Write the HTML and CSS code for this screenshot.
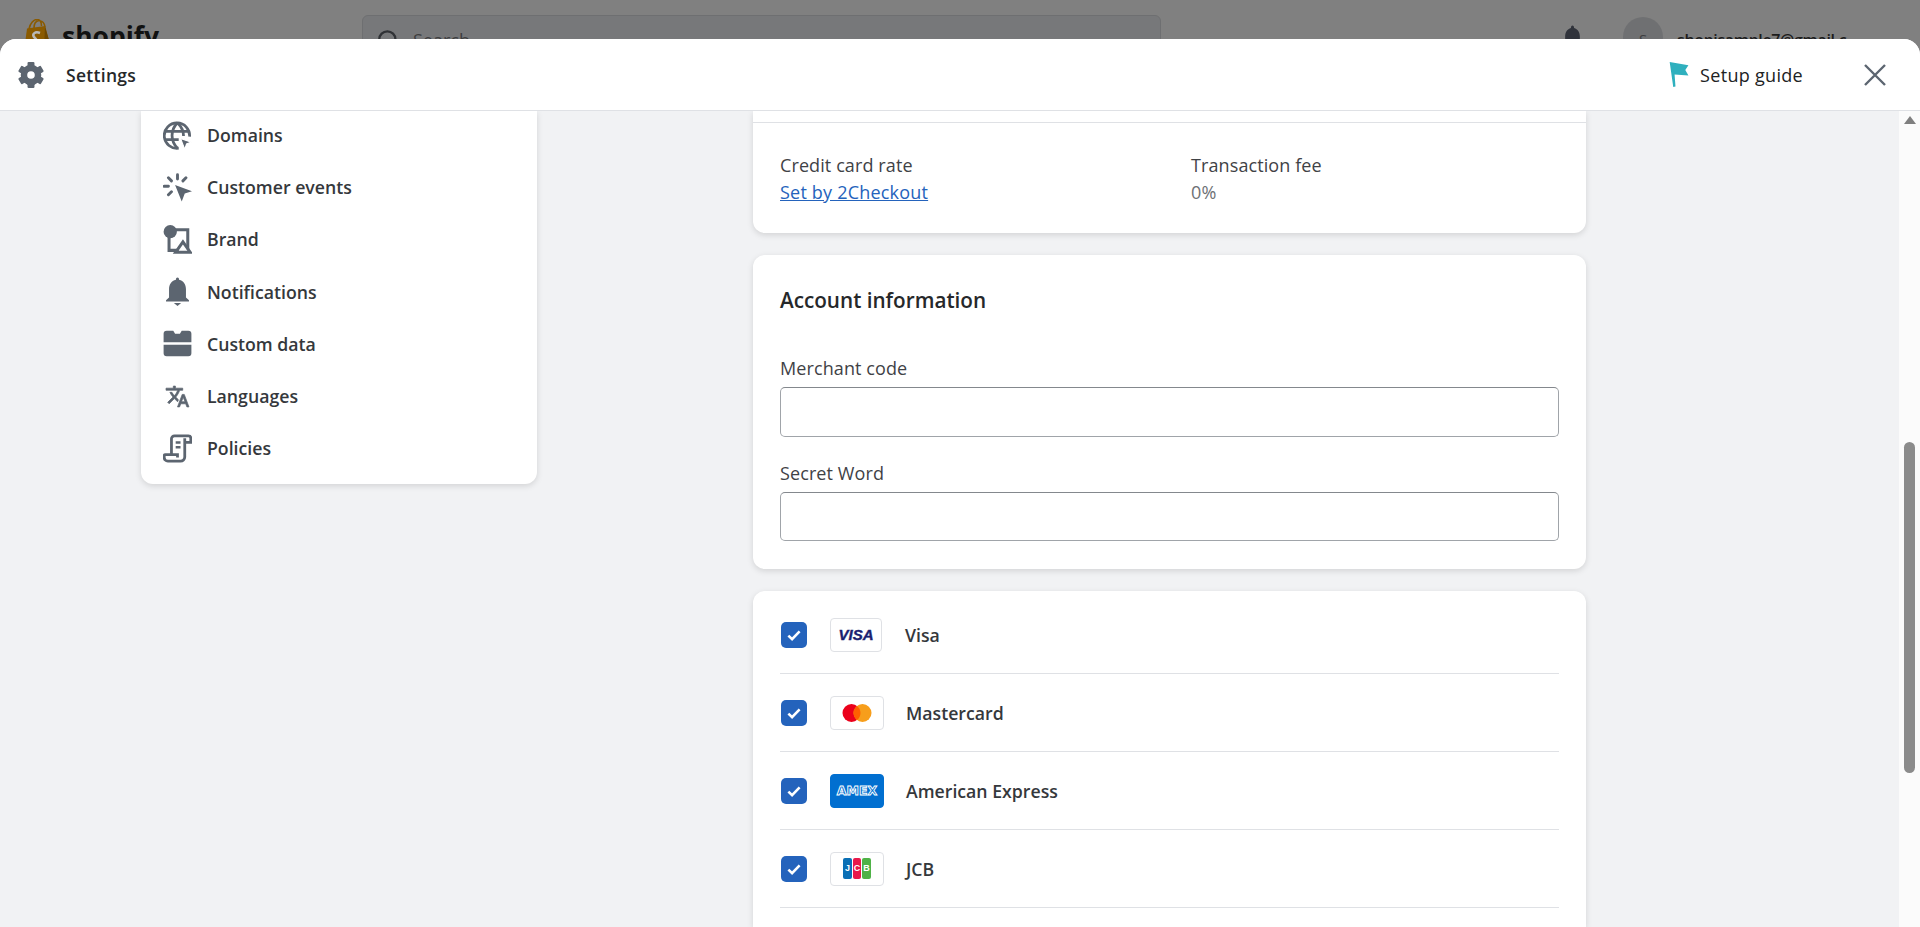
FILE: index.html
```html
<!DOCTYPE html>
<html lang="en">
<head>
    <meta charset="UTF-8">
    <meta name="viewport" content="width=device-width, initial-scale=1.0">
    <title>Settings</title>
    <link rel="stylesheet" href="styles.css">
</head>
<body>

    <div class="topbar">
        <div class="brand">
            <svg class="brand-bag" viewBox="0 0 28 32"><path d="M5 10c1-6 5-9.500 8-9.500 3 0 4.500 3 4.500 6.500M10 9c0-4 2-7 5-7.500M16 2c3 0 4.500 3 5 6" fill="none" stroke="#8a5a00" stroke-width="1.600"/><path d="M3 9.500L21 7l7 25H0z" fill="#8a5a00"/><path d="M21 7l7 25h-8z" fill="#6e4800"/><path d="M16 14c-5-2-8 1-6 4 2 2 4 3 1 7-1 1-3 0-4-1" fill="none" stroke="#b9b9b9" stroke-width="2.500"/></svg>
            <span class="brand-name">shopify</span>
        </div>
        <div class="search">
            <svg class="search-icon" viewBox="0 0 20 20"><circle cx="9" cy="9" r="7" fill="none" stroke="#303236" stroke-width="2"/><path d="M14 14l5 5" stroke="#303236" stroke-width="2"/></svg>
            <span>Search</span>
        </div>
        <svg class="top-bell" viewBox="0 0 20 24"><path d="M10 0c1 0 1.500 1 1.500 2.500 3.500 1 5.500 4 5.500 8v8H3v-8c0-4 2-7 5.500-8C8.500 1 9 0 10 0z" fill="#30333b"/></svg>
        <div class="avatar">S</div>
        <span class="email">shopisample7@gmail.c</span>
    </div>

    <div class="modal">
        <div class="modal-head">
            <svg class="gear" viewBox="0 0 24 24">
                <circle cx="12" cy="12" r="6.500" fill="none" stroke="#5c6570" stroke-width="6"/>
                <g fill="#5c6570">
                    <rect x="8.800" y="0" width="6.400" height="5.500" rx="1"/>
                    <rect x="8.800" y="18.500" width="6.400" height="5.500" rx="1"/>
                    <rect x="8.800" y="0" width="6.400" height="5.500" rx="1" transform="rotate(60 12 12)"/>
                    <rect x="8.800" y="0" width="6.400" height="5.500" rx="1" transform="rotate(120 12 12)"/>
                    <rect x="8.800" y="0" width="6.400" height="5.500" rx="1" transform="rotate(240 12 12)"/>
                    <rect x="8.800" y="0" width="6.400" height="5.500" rx="1" transform="rotate(300 12 12)"/>
                </g>
            </svg>
            <span class="modal-title">Settings</span>
            <svg class="flag" viewBox="0 0 22 28"><path d="M0 0l21 3.500-3.500 5.500 3.500 6-15.500-1 1 13.500-2.500.5z" fill="#2fb0be"/></svg>
            <span class="setup">Setup guide</span>
            <svg class="close" viewBox="0 0 24 24"><path d="M2 2l20 20M22 2L2 22" stroke="#5c6570" stroke-width="2.400" fill="none"/></svg>
        </div>

        <div class="modal-body">
            <div class="content">
                <div class="side">
                    <ul class="side-list">
                        <li>
                            <svg viewBox="0 0 24 24" fill="none" stroke="#5c6570" stroke-width="2.300"><path d="M22 13a10.500 10.500 0 1 0-9 9.500"/><path d="M2 8.500h20M2 15.500h11M12 1.500c-6 6-6 15 0 21M12 1.500c3.500 3.500 5 8 5 11"/><path d="M14.500 14.500l9 3-4 1.500-1.500 4.500z" fill="#5c6570" stroke="#fff" stroke-width="1"/></svg>
                            <span>Domains</span>
                        </li>
                        <li>
                            <svg viewBox="0 0 24 24" fill="none" stroke="#5c6570" stroke-width="2.400" stroke-linecap="round"><path d="M12 1.500v3.500M4.500 4l2.500 2.500M19 4l-2.500 2.500M1 11h3.500M4.500 18l2.500-2.500"/><path d="M10 10l14 5-6 2-2.500 6.500z" fill="#5c6570" stroke="none"/></svg>
                            <span>Customer events</span>
                        </li>
                        <li>
                            <svg viewBox="0 0 24 24" fill="none" stroke="#5c6570" stroke-width="2.500"><path d="M9 4h11.500v16M5 10v11h8"/><path d="M16.500 14l6 8.500h-12z"/><circle cx="6" cy="5.500" r="5.500" fill="#5c6570" stroke="none"/></svg>
                            <span>Brand</span>
                        </li>
                        <li>
                            <svg viewBox="0 0 24 24" fill="#5c6570"><path d="M12 .5c.8 0 1.300.7 1.300 1.800 3.900 1 5.700 4 5.700 7.700v7l2.500 2.300v1H2.500v-1L5 17v-7c0-3.700 1.800-6.700 5.700-7.700C10.700 1.200 11.200.5 12 .5z"/><path d="M9 21.500h6l-3 2.500z"/></svg>
                            <span>Notifications</span>
                        </li>
                        <li>
                            <svg viewBox="0 0 24 24" fill="#5c6570"><path d="M3 1.500h5.500l1.500 2.500h4l1.500-2.500H21a2.500 2.500 0 0 1 2.500 2.500v7H.5V4A2.500 2.500 0 0 1 3 1.500z"/><path d="M.5 13h23v7A2.500 2.500 0 0 1 21 22.500H3A2.500 2.500 0 0 1 .5 20z"/></svg>
                            <span>Custom data</span>
                        </li>
                        <li>
                            <svg class="lang-icon" viewBox="0 0 24 24" fill="#5c6570" stroke="#5c6570" stroke-width="0.700"><path d="M12.870 15.070l-2.540-2.510.03-.03c1.740-1.940 2.980-4.170 3.710-6.530H17V4h-7V2H8v2H1v1.990h11.170C11.500 7.920 10.440 9.750 9 11.350 8.070 10.320 7.300 9.190 6.690 8h-2c.73 1.630 1.730 3.170 2.980 4.560l-5.090 5.020L4 19l5-5 3.110 3.110.76-2.040zM18.500 10h-2L12 22h2l1.120-3h4.750L21 22h2l-4.500-12zm-2.620 7l1.620-4.330L19.120 17h-3.240z"/></svg>
                            <span>Languages</span>
                        </li>
                        <li>
                            <svg viewBox="0 0 24 24" fill="none" stroke="#5c6570" stroke-width="2.300"><path d="M7 17V4a2.500 2.500 0 0 1 2.500-2.500H21a2 2 0 0 1 2 2V7h-5M18 3.500V19a3.500 3.500 0 0 1-3.500 3.500H4a3 3 0 0 1-3-3V18a1 1 0 0 1 1-1h10v2.500"/><path d="M10.500 7h4M10.500 11h4" stroke-width="2"/></svg>
                            <span>Policies</span>
                        </li>
                    </ul>
                </div>

                <div class="main">
                    <div class="card rate-card">
                        <div class="rate-top"></div>
                        <div class="rate-row">
                            <div class="rate-col">
                                <div class="rate-label">Credit card rate</div>
                                <a class="rate-link" href="#">Set by 2Checkout</a>
                            </div>
                            <div class="rate-col">
                                <div class="rate-label">Transaction fee</div>
                                <div class="rate-value">0%</div>
                            </div>
                        </div>
                    </div>

                    <div class="card account-card">
                        <h2>Account information</h2>
                        <label class="field">
                            <span>Merchant code</span>
                            <input type="text">
                        </label>
                        <label class="field">
                            <span>Secret Word</span>
                            <input type="text">
                        </label>
                    </div>

                    <div class="card methods-card">
                        <div class="method">
                            <span class="check"><svg viewBox="0 0 16 16"><path d="M3 8.500l3.300 3.200L13 4.800" fill="none" stroke="#fff" stroke-width="2.300"/></svg></span>
                            <span class="pay-logo logo-visa">VISA</span>
                            <span class="method-name">Visa</span>
                        </div>
                        <div class="method">
                            <span class="check"><svg viewBox="0 0 16 16"><path d="M3 8.500l3.300 3.200L13 4.800" fill="none" stroke="#fff" stroke-width="2.300"/></svg></span>
                            <span class="pay-logo logo-wide">
                                <svg class="mc" viewBox="0 0 30 20"><circle cx="9.500" cy="10" r="9" fill="#eb001b"/><circle cx="20.500" cy="10" r="9" fill="#f79e1b"/><path d="M15 2.900a9 9 0 0 1 0 14.200a9 9 0 0 1 0-14.200z" fill="#ff5f00"/></svg>
                            </span>
                            <span class="method-name name-wide">Mastercard</span>
                        </div>
                        <div class="method">
                            <span class="check"><svg viewBox="0 0 16 16"><path d="M3 8.500l3.300 3.200L13 4.800" fill="none" stroke="#fff" stroke-width="2.300"/></svg></span>
                            <span class="pay-logo logo-wide logo-amex">AMEX</span>
                            <span class="method-name name-wide">American Express</span>
                        </div>
                        <div class="method">
                            <span class="check"><svg viewBox="0 0 16 16"><path d="M3 8.500l3.300 3.200L13 4.800" fill="none" stroke="#fff" stroke-width="2.300"/></svg></span>
                            <span class="pay-logo logo-wide">
                                <span class="jcb">
                                    <span class="jcb-bar jcb-blue">J</span>
                                    <span class="jcb-bar jcb-red">C</span>
                                    <span class="jcb-bar jcb-green">B</span>
                                </span>
                            </span>
                            <span class="method-name name-wide">JCB</span>
                        </div>
                    </div>
                </div>
            </div>

            <div class="scrollbar">
                <span class="scroll-up"></span>
                <div class="scroll-thumb"></div>
            </div>
        </div>
    </div>

</body>
</html>
```

FILE: styles.css
```css
* {
    box-sizing: border-box;
}
html, body {
    height: 100%;
}
body {
    margin: 0;
    overflow: hidden;
    background-color: #808080;
    font-family: "Open Sans", "Noto Sans", Arial, sans-serif;
    color: #303030;
}

/* dimmed admin bar behind the modal */
.topbar {
    display: flex;
    align-items: flex-start;
    height: 39px;
    overflow: hidden;
}
.brand {
    display: flex;
    width: 362px;
    padding: 19px 0 0 24px;
}
.brand-bag {
    width: 28px;
    height: 32px;
}
.brand-name {
    margin-left: 10px;
    margin-top: -1px;
    font-size: 26.500px;
    font-weight: 700;
    color: #111;
}
.search {
    display: flex;
    align-items: center;
    width: 799px;
    height: 50px;
    margin-top: 15px;
    padding-left: 14px;
    background-color: #77787a;
    border: 1px solid #6e6f71;
    border-radius: 6px;
    font-size: 18px;
    color: #3d3e40;
}
.search-icon {
    width: 23px;
    height: 23px;
    margin-right: 13px;
}
.top-bell {
    width: 21px;
    height: 26px;
    margin: 25px 0 0 401px;
}
.avatar {
    width: 40px;
    height: 40px;
    margin: 17px 0 0 40px;
    padding-top: 12px;
    border-radius: 50%;
    background-color: #6f7072;
    text-align: center;
    font-size: 15px;
    color: #3d3e40;
}
.email {
    margin: 29px 0 0 14px;
    font-size: 16px;
    font-weight: 600;
    letter-spacing: -0.350px;
    color: #1c1c1c;
    white-space: nowrap;
}

/* modal */
.modal {
    display: flex;
    flex-direction: column;
    height: 888px;
    background-color: #f1f2f4;
    border-radius: 16px 16px 0 0;
    overflow: hidden;
}
.modal-head {
    display: flex;
    align-items: center;
    flex-shrink: 0;
    height: 72px;
    padding: 0 33px 0 18px;
    background: white;
    border-bottom: 1px solid #dfe1e5;
}
.gear {
    width: 26px;
    height: 26px;
}
.modal-title {
    flex: 1;
    margin-left: 22px;
    font-size: 17.500px;
    font-weight: 600;
    letter-spacing: 0.300px;
    color: #26282a;
}
.flag {
    width: 21px;
    height: 25px;
}
.setup {
    margin-left: 10px;
    font-size: 18px;
    letter-spacing: 0.300px;
    color: #202223;
}
.close {
    width: 24px;
    height: 24px;
    margin-left: 60px;
}
.modal-body {
    display: flex;
    flex: 1;
    min-height: 0;
}
.content {
    display: flex;
    flex: 1;
    padding-left: 141px;
    overflow: hidden;
}

/* left nav */
.side {
    width: 396px;
    height: 373px;
    background: white;
    border-radius: 0 0 12px 12px;
    box-shadow: 0 2px 6px rgba(0, 0, 0, 0.13);
}
.side-list {
    list-style: none;
    margin: -2px 0 0;
    padding: 0 0 0 22px;
}
.side-list li {
    display: flex;
    align-items: center;
    height: 52.200px;
    font-size: 17.700px;
    font-weight: 600;
    color: #35383c;
}
.side-list svg {
    width: 29px;
    height: 29px;
    margin-right: 15px;
    flex-shrink: 0;
}
.side-list .lang-icon {
    width: 25px;
    height: 25px;
    margin: 0 17px 0 2px;
}

/* right column */
.main {
    display: flex;
    flex-direction: column;
    gap: 22px;
    width: 833px;
    margin-left: 216px;
}
.card {
    background: white;
    border-radius: 12px;
    box-shadow: 0 2px 6px rgba(0, 0, 0, 0.13);
}
.rate-card {
    height: 122px;
    border-radius: 0 0 12px 12px;
    flex-shrink: 0;
}
.rate-top {
    height: 12px;
    border-bottom: 1px solid #dfe1e5;
}
.rate-row {
    display: flex;
    padding: 29px 27px 0;
    font-size: 18px;
    letter-spacing: 0.100px;
    line-height: 27px;
}
.rate-col {
    width: 411px;
}
.rate-col + .rate-col {
    width: auto;
}
.rate-label {
    color: #3f4246;
}
.rate-link {
    color: #2463bc;
    letter-spacing: 0.200px;
}
.rate-value {
    color: #6d7175;
}
.account-card {
    flex-shrink: 0;
    height: 314px;
    padding: 28px 27px 0;
}
.account-card h2 {
    margin: 0 0 38px;
    font-size: 20.700px;
    line-height: 34px;
    font-weight: 600;
    color: #26282a;
}
.field {
    display: block;
    margin-bottom: 23px;
    font-size: 18px;
    letter-spacing: 0.100px;
    line-height: 26px;
    color: #3f4246;
}
.field span {
    display: block;
    margin-bottom: 6px;
}
.field input {
    display: block;
    width: 100%;
    height: 50px;
    background: white;
    border: 1px solid #a0a4a9;
    border-top-color: #84888d;
    border-radius: 5px;
}
.field + .field input {
    height: 49px;
}
.methods-card {
    flex: 1;
    padding: 5px 27px 0;
    border-radius: 12px 12px 0 0;
}
.method {
    display: flex;
    align-items: center;
    height: 78px;
    padding-left: 1px;
    border-bottom: 1px solid #dfe1e5;
}
.check {
    display: flex;
    align-items: center;
    justify-content: center;
    width: 26px;
    height: 26px;
    background-color: #2463bc;
    border-radius: 5px;
}
.check svg {
    width: 18px;
    height: 18px;
}
.pay-logo {
    display: flex;
    align-items: center;
    justify-content: center;
    width: 52px;
    height: 34px;
    margin-left: 23px;
    background: white;
    border: 1px solid #dfe1e5;
    border-radius: 4px;
    flex-shrink: 0;
}
.logo-wide {
    width: 54px;
}
.logo-visa {
    font-family: "Liberation Sans", Arial, sans-serif;
    font-size: 15px;
    font-weight: 700;
    font-style: italic;
    color: #1a1f71;
    -webkit-text-stroke: 0.400px #1a1f71;
}
.logo-amex {
    background-color: #016fd0;
    border-color: #016fd0;
    font-family: "DejaVu Sans", Arial, sans-serif;
    font-size: 12.500px;
    font-weight: 700;
    color: #016fd0;
    -webkit-text-stroke: 0.900px white;
}
.mc {
    width: 30px;
    height: 20px;
}
.jcb {
    display: flex;
    gap: 1px;
}
.jcb-bar {
    width: 8.500px;
    height: 21px;
    border-radius: 2px;
    font-family: "Liberation Sans", Arial, sans-serif;
    font-size: 9px;
    font-weight: 700;
    line-height: 21px;
    text-align: center;
    color: white;
}
.jcb-blue {
    background-color: #0a6fb5;
}
.jcb-red {
    background-color: #e8194a;
}
.jcb-green {
    background-color: #4fb247;
}
.method-name {
    margin-left: 23px;
    font-size: 17.700px;
    font-weight: 600;
    color: #35383c;
}
.name-wide {
    margin-left: 22px;
}

/* scrollbar */
.scrollbar {
    display: flex;
    flex-direction: column;
    align-items: center;
    width: 21px;
    flex-shrink: 0;
    background-color: #fbfbfb;
}
.scroll-up {
    width: 0;
    height: 0;
    margin-top: 5px;
    border-left: 6px solid transparent;
    border-right: 6px solid transparent;
    border-bottom: 8px solid #7f7f7f;
}
.scroll-thumb {
    width: 11px;
    height: 331px;
    margin-top: 318px;
    background-color: #8b8b8b;
    border-radius: 6px;
}
```
